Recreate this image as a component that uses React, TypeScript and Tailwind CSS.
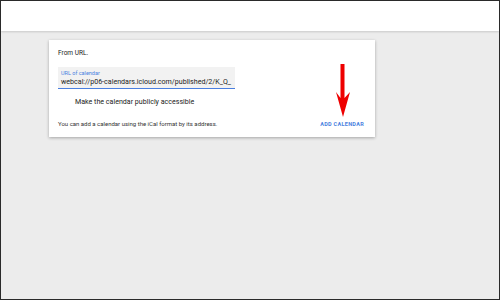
const App = () => {
  return (
    <div
      className="w-[500px] h-[300px] border border-[#2a2a2a] bg-[#ececec] flex flex-col overflow-hidden"
      style={{ fontFamily: "Roboto, 'Liberation Sans', sans-serif" }}
    >
      <header className="h-[30px] shrink-0 bg-white shadow-[0_1px_2px_rgba(0,0,0,0.15)]" />
      <main className="pl-[48px] pt-[9px]">
        <div className="relative w-[326px] h-[97px] bg-white shadow-[0_1px_3px_rgba(0,0,0,0.3)] flex flex-col px-[9px] pt-[9px]">
          <p className="text-[6.5px] leading-[8px] text-[#222]">From URL.</p>
          <div className="mt-[10px] w-[177px] h-[22px] bg-[#f2f2f2] border-b border-[#4a7fe0] px-[3px] pt-[3px]">
            <p className="text-[5.5px] leading-[7px] text-[#4a7fe0]">URL of calendar</p>
            <p className="text-[7.1px] leading-[10px] text-[#222] whitespace-nowrap">
              webcal://p06-calendars.icloud.com/published/2/K_Q_
            </p>
          </div>
          <p className="mt-[8px] pl-[17px] text-[7.1px] leading-[10px] text-[#222]">
            Make the calendar publicly accessible
          </p>
          <div className="flex justify-between items-center mt-[13px] pr-[2px]">
            <p className="text-[6px] leading-[8px] text-[#333]">
              You can add a calendar using the iCal format by its address.
            </p>
            <p className="text-[5.5px] leading-[8px] font-bold text-[#4a7fe0] tracking-[0.3px]">ADD CALENDAR</p>
          </div>
          {/* red annotation arrow */}
          <svg className="absolute left-[285px] top-[24px]" width="18" height="54" viewBox="0 0 18 54">
            <path d="M6.5 0 H10.5 V34 L16 28 L9 53 L2 28 L6.5 34 Z" fill="#ee0000" />
          </svg>
        </div>
      </main>
    </div>
  );
};

export default App;
